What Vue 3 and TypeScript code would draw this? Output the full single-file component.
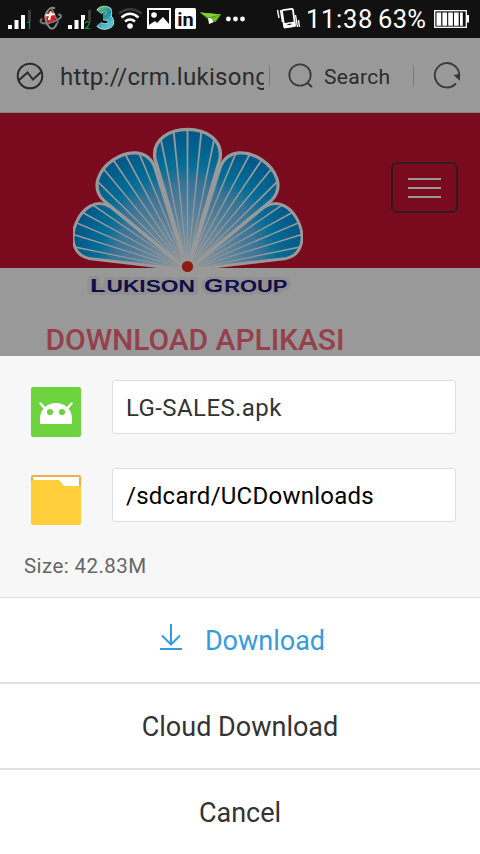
<script setup lang="ts">
interface Petal {
  angle: number
  scale: number
}

const petals: Petal[] = [
  { angle: -67, scale: 0.86 },
  { angle: 67, scale: 0.86 },
  { angle: -34, scale: 0.945 },
  { angle: 34, scale: 0.945 },
  { angle: 0, scale: 1 },
]
const rays: number[] = [-11.5, -5.7, 0, 5.7, 11.5]
const fileName = 'LG-SALES.apk'
const folder = '/sdcard/UCDownloads'
</script>

<template>
  <div class="screen">
    <header class="status">
      <svg class="s-signal" width="24" height="38" viewBox="8 0 24 38">
        <path fill="#fff" d="M8 25h4v4H8zM14.500 20h4v9h-4zM21 15h4v14h-4z" />
        <path fill="#3c3c3c" d="M28 10h3v19h-3z" />
        <path fill="#111" d="M27 21h5v8h-5z" />
        <text x="26.500" y="29" font-size="10" fill="#0fae50">1</text>
      </svg>
      <svg class="s-globe" width="24" height="38" viewBox="39 0 24 38">
        <circle cx="50" cy="17" r="5.800" fill="#e01818" />
        <path d="M58 14.500c3 0 4 1.500 2 3.500-3 3-10 5.500-15 5.500-4 0-6-2-3-5" fill="none" stroke="#777" stroke-width="2" />
        <path d="M55 8.500c-4-2-7 1-9 5-1.500 5 0 11 4 14.500 3 2 6-1 7-5" fill="none" stroke="#888" stroke-width="2" />
        <path d="M51.500 9c2.500 3 3.500 8 7 14" fill="none" stroke="#777" stroke-width="1.600" />
        <path d="M51 11.500l-2 8.500M45.500 15.500l9-1.500" stroke="#fff" stroke-width="2.200" />
      </svg>
      <svg class="s-signal2" width="25" height="38" viewBox="68 0 25 38">
        <path fill="#fff" d="M68 25h4v4h-4zM74.500 20h4v9h-4zM81 15h4v14h-4z" />
        <path fill="#3c3c3c" d="M88 10h3v11h-3z" />
        <path fill="#111" d="M84 20h5v9h-5z" />
        <text x="84.500" y="29" font-size="11" fill="#0fae50">2</text>
      </svg>
      <svg class="s-three" width="20" height="38" viewBox="95 0 20 38">
        <defs>
          <linearGradient id="three" x1="0" y1="0" x2=".5" y2="1">
            <stop offset="0" stop-color="#55b878" /><stop offset=".5" stop-color="#178fa5" /><stop offset="1" stop-color="#58bfd1" />
          </linearGradient>
        </defs>
        <path d="M99 12c3-4 11-4 10 1 0 3-4 4-6 4 4 0 8 1 8 5 0 5-9 6-12 2" fill="none" stroke="#c2e6da" stroke-width="6.500" />
        <path d="M99 12c3-4 11-4 10 1 0 3-4 4-6 4 4 0 8 1 8 5 0 5-9 6-12 2" fill="none" stroke="url(#three)" stroke-width="5" />
      </svg>
      <svg class="s-wifi" width="24" height="38" viewBox="118 0 24 38" fill="none" stroke-width="2.500">
        <path d="M119 13.500Q130 5 141.500 13.500" stroke="#3c3c3c" />
        <path d="M121.500 17.500Q130 10 138.500 17.500M125 21.500Q130 17.500 135 21.500" stroke="#fff" />
        <circle cx="130" cy="26" r="2.800" fill="#fff" />
      </svg>
      <svg class="s-image" width="24" height="38" viewBox="147 0 24 38">
        <rect x="148" y="9" width="22" height="19" fill="#111" stroke="#fff" stroke-width="2" />
        <circle cx="154" cy="15" r="2.800" fill="#fff" />
        <path d="M149 25l6-4 2 2 6-6 6 7v4h-20z" fill="#fff" />
      </svg>
      <svg class="s-in" width="21" height="38" viewBox="175 0 21 38">
        <rect x="175" y="8" width="21" height="21" rx="1.500" fill="#fff" />
        <text x="177.300" y="25.500" font-size="18.500" font-weight="700" textLength="16.500" lengthAdjust="spacingAndGlyphs" fill="#111">in</text>
      </svg>
      <svg class="s-plane" width="22" height="38" viewBox="200 0 22 38">
        <path d="M200 12.500l21 2-5.500 7.500z" fill="#6fbd22" />
        <path d="M200 12.500l8 7 13-5z" fill="#4b9217" />
        <path d="M200 12.500l21 2-13 3z" fill="#84cf30" />
        <path d="M208 18l1 6 5-2-3-4z" fill="#fff" />
      </svg>
      <svg class="s-dots" width="20" height="38" viewBox="226 0 20 38" fill="#fff">
        <circle cx="228.400" cy="19" r="2.400" /><circle cx="235.500" cy="19" r="2.400" /><circle cx="242.500" cy="19" r="2.400" />
      </svg>
      <svg class="s-vibrate" width="25" height="38" viewBox="276 0 25 38">
        <g transform="rotate(-8 288 18)">
          <rect x="283" y="9.500" width="11" height="17.500" rx="1" fill="#111" stroke="#fff" stroke-width="1.800" />
          <path d="M283 22.500h11v5h-11z" fill="#fff" /><path d="M286.500 24.500h4" stroke="#111" />
        </g>
        <path d="M277.500 10l1.500 8M280.500 10l2 12M295.500 15l2 12M298.500 20l1 7" stroke="#fff" stroke-width="1.400" />
      </svg>
      <span class="clock">11:38</span>
      <span class="percent">63%</span>
      <svg class="s-battery" width="36" height="38" viewBox="434 0 36 38">
        <rect x="434.700" y="10.700" width="31.600" height="16.600" fill="none" stroke="#fff" stroke-width="1.300" />
        <path fill="#fff" d="M467 15h2v7.500h-2zM436.500 12.500h4.700v13.200h-4.700zM442.400 12.500h4.700v13.200h-4.700zM448.200 12.500h4.700v13.200h-4.700zM454 12.500h4.700v13.200h-4.700zM460 12.500h2.800v13.200H460z" />
      </svg>
    </header>

    <nav class="address">
      <svg class="site" width="28" height="28" viewBox="0 0 28 28" fill="none" stroke="#2b2b2b" stroke-width="2">
        <circle cx="14" cy="14" r="12.300" />
        <path d="M2.500 18.500L11.500 10.500l5.500 7L25.500 9.500" />
      </svg>
      <span class="url">http://crm.lukisong</span>
      <i class="rule"></i>
      <svg class="lens" width="26" height="26" viewBox="0 0 26 26" fill="none" stroke="#3b3b3b" stroke-width="1.800">
        <circle cx="12" cy="12" r="10.700" /><path d="M19.500 20l4.500 4" stroke-width="2.200" />
      </svg>
      <span class="search">Search</span>
      <i class="rule second"></i>
      <svg class="reload" width="28" height="28" viewBox="0 0 28 28">
        <path d="M23 21.500A12.200 12.200 0 1 1 26.200 14" fill="none" stroke="#3b3b3b" stroke-width="1.900" />
        <path d="M20.500 13l6.500-1v6.800z" fill="#333" />
      </svg>
    </nav>

    <section class="page">
      <div class="banner">
        <svg class="logo" width="230" height="176" viewBox="73 124 230 176">
          <defs>
            <radialGradient id="petal" gradientUnits="userSpaceOnUse" cx="0" cy="0" r="140">
              <stop offset="0" stop-color="#929799" />
              <stop offset=".24" stop-color="#728b9c" />
              <stop offset=".62" stop-color="#397497" />
              <stop offset=".76" stop-color="#006d96" />
              <stop offset="1" stop-color="#005687" />
            </radialGradient>
            <clipPath id="shape">
              <path d="M0 0L-32.500-111C-39-150.500 39-150.500 32.500-111z" />
            </clipPath>
          </defs>
          <g transform="translate(187.500 270)">
            <g v-for="p in petals" :key="p.angle" :transform="`rotate(${p.angle}) scale(${p.scale})`">
              <path d="M0 0L-32.500-111C-39-150.500 39-150.500 32.500-111z" fill="url(#petal)" stroke="#999" stroke-width="3.400" stroke-linejoin="round" />
              <g clip-path="url(#shape)">
                <path v-for="r in rays" :key="r" d="M-.3 0L-1-142H1L.3 0z" fill="#999" :transform="`rotate(${r})`" />
              </g>
            </g>
          </g>
          <circle cx="187.500" cy="266.500" r="8.500" fill="#999" opacity=".7" />
          <circle cx="187.500" cy="266.500" r="5.600" fill="#8c1b12" />
          <g font-weight="700" font-family="'Liberation Sans', sans-serif" fill="#100d49" stroke="#909090" stroke-width="6" paint-order="stroke" stroke-linejoin="round">
            <text x="90" y="292" font-size="19" textLength="105" lengthAdjust="spacingAndGlyphs">L<tspan font-size="16">UKISON</tspan></text>
            <text x="204" y="292" font-size="19" textLength="83.500" lengthAdjust="spacingAndGlyphs">G<tspan font-size="16">ROUP</tspan></text>
          </g>
        </svg>
        <div class="burger"><i></i><i></i><i></i></div>
      </div>
      <h1>DOWNLOAD APLIKASI</h1>
    </section>

    <section class="sheet">
      <div class="row">
        <svg width="50" height="50" viewBox="0 0 50 50">
          <rect width="50" height="50" rx="2" fill="#6dd43f" />
          <path d="M9 37V31a16 15 0 0 1 32 0v6z" fill="#fff" />
          <path d="M9.500 16.500l4 4.500M40.500 16.500l-4 4.500" stroke="#fff" stroke-width="2.500" stroke-linecap="round" />
          <circle cx="19" cy="25" r="3.100" fill="#6dd43f" /><circle cx="31" cy="25" r="3.100" fill="#6dd43f" />
        </svg>
        <div class="field name">{{ fileName }}</div>
      </div>
      <div class="row">
        <svg width="50" height="50" viewBox="0 0 50 50">
          <rect width="50" height="40" rx="2" fill="#f5ad48" />
          <path d="M2 2h46v15H2z" fill="#fff" />
          <path d="M0 7q0-2 2-2h25q2 0 3 2l3 4h17v37q0 2-2 2H2q-2 0-2-2z" fill="#ffcf3b" />
        </svg>
        <div class="field path">{{ folder }}</div>
      </div>
      <p class="size">Size: 42.83M</p>
    </section>

    <button class="action primary">
      <svg width="22" height="26" viewBox="0 0 22 26" fill="none" stroke="#359be0" stroke-width="2">
        <path d="M11 0v20M2 11.500l9 9 9-9M0 25h22" />
      </svg>
      <span class="dl">Download</span>
    </button>
    <button class="action"><span class="cloud">Cloud Download</span></button>
    <button class="action last"><span class="cancel">Cancel</span></button>
  </div>
</template>

<style>
body { margin: 0; background: #fff; }
</style>

<style scoped>
.screen { width: 480px; height: 854px; overflow: hidden; display: flex; flex-direction: column; background: #fff; font-family: Roboto, sans-serif; color: #333; }
svg { display: block; flex: none; }
.status { height: 38px; flex: none; display: flex; background: #111; color: #fff; padding-left: 8px; box-sizing: border-box; }
.s-globe { margin-left: 7px; }
.s-signal2 { margin-left: 5px; }
.s-three { margin-left: 2px; }
.s-wifi { margin-left: 3px; }
.s-image { margin-left: 5px; }
.s-in { margin-left: 4px; }
.s-plane { margin-left: 4px; }
.s-dots { margin-left: 4px; }
.s-vibrate { margin-left: 30px; }
.clock { width: 72px; margin-left: 5px; font-size: 25.500px; line-height: 39px; letter-spacing: .7px; white-space: nowrap; }
.percent { width: 50px; font-size: 25.500px; line-height: 39px; letter-spacing: .3px; white-space: nowrap; }
.s-battery { margin-left: 6px; }

.address { height: 75px; flex: none; box-sizing: border-box; border-bottom: 1px solid #858585; display: flex; align-items: center; padding: 2px 0 0 16px; background: #999; color: #2b2b2b; }
.url { width: 204px; margin-left: 16px; overflow: hidden; white-space: nowrap; font-size: 24px; line-height: 36px; letter-spacing: .3px; padding-top: 2px; }
.rule { width: 1px; height: 21px; background: #7b7b7b; margin: 0 0 2px 5px; }
.lens { margin-left: 18px; }
.search { width: 70px; margin-left: 10px; font-size: 21px; letter-spacing: .3px; padding-top: 1px; }
.second { margin-left: 19px; }
.reload { margin-left: 19px; }

.page { height: 243px; flex: none; overflow: hidden; background: #999; }
.banner { height: 155px; background: #7a0a1e; display: flex; align-items: flex-start; }
.logo { margin: 11px 0 0 73px; }
.burger { width: 67px; height: 51px; box-sizing: border-box; border: 2px solid #2b1d20; border-radius: 6px; margin: 49px 0 0 88px; display: flex; flex-direction: column; align-items: center; justify-content: center; gap: 7px; }
.burger i { width: 33px; height: 2px; background: #999; position: relative; top: 0; }
h1 { margin: 54px 0 0 45.500px; font-size: 30px; line-height: 35px; font-weight: 500; letter-spacing: -.05px; color: #963f4d; white-space: nowrap; }

.sheet { height: 242px; flex: none; box-sizing: border-box; border-bottom: 1px solid #dedede; background: #f7f7f7; padding: 24px 24px 0 31px; display: flex; flex-direction: column; }
.row { display: flex; height: 54px; margin-bottom: 34px; gap: 31px; }
.row svg { margin-top: 7px; }
.field { flex: 1; box-sizing: border-box; border: 1px solid #dedede; border-radius: 3px; background: #fff; padding-left: 13px; font-size: 24px; line-height: 54px; white-space: nowrap; }
.name { letter-spacing: .4px; }
.path { color: #000; letter-spacing: .25px; }
.size { margin: -4px 0 0 -7px; font-size: 20.500px; line-height: 28px; letter-spacing: .42px; color: #666; }

.action { height: 86px; flex: none; box-sizing: border-box; width: 100%; border: 0; border-bottom: 2px solid #e0e0e0; background: #fff; padding: 0; margin: 0; display: flex; align-items: center; justify-content: center; font: 27px/36px Roboto, sans-serif; color: #333; }
.action span { padding-top: 2px; white-space: nowrap; }
.primary { color: #359be0; gap: 23px; padding-left: 5px; }
.primary svg { margin-bottom: 6px; }
.last { height: 84px; border-bottom: 0; }
</style>
